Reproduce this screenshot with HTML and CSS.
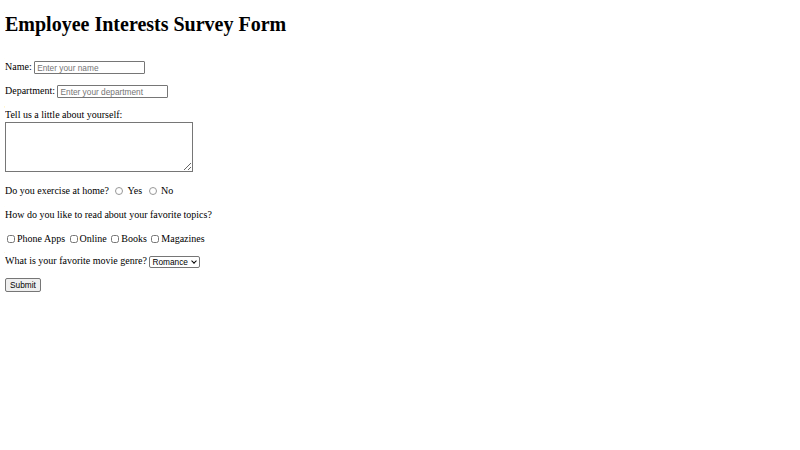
FILE: index.html
```html
<!DOCTYPE html>
<html lang="en">

<head>
    <meta charset="UTF-8">
    <meta name="viewport" content="width=device-width, initial-scale=1.0">
    <title>Employee Interests Survey Form</title>
    <link rel="stylesheet" href="styles.css">
</head>

<body>

<h1>Employee Interests Survey Form</h1>

<form>
    <p>
        <label for="name">Name:</label>
        <input type="text" id="name" name="name" placeholder="Enter your name"/>
    </p>
    <p>
        <label for="department">Department:</label>
        <input type="text" id="department" name="department" placeholder="Enter your department"/>
    </p>
    <p>
        <label for="about">Tell us a little about yourself:</label><br/>
        <textarea id="about" name="about" class="about"></textarea>
    </p>
    <p>
        Do you exercise at home?
        <input type="radio" id="exYes" name="exercise" value="yes"/>
        <label for="exYes">Yes</label>
        <input type="radio" id="exNo" name="exercise" value="no"/>
        <label for="exNo">No</label>
    </p>
    <p>How do you like to read about your favorite topics?</p>
    <p class="reads">
        <input type="checkbox" id="apps" name="read" value="apps"/><label for="apps">Phone Apps</label>
        <input type="checkbox" id="online" name="read" value="online"/><label for="online">Online</label>
        <input type="checkbox" id="books" name="read" value="books"/><label for="books">Books</label>
        <input type="checkbox" id="magazines" name="read" value="magazines"/><label for="magazines">Magazines</label>
    </p>
    <p class="genre">
        <label for="genre">What is your favorite movie genre?</label>
        <span class="pick">
            <select id="genre" name="genre">
                <option>Romance</option>
                <option>Comedy</option>
                <option>Action</option>
                <option>Drama</option>
                <option>Horror</option>
            </select>
        </span>
    </p>
    <button type="submit">Submit</button>
</form>

</body>

</html>
```

FILE: styles.css
```css
body {
    margin: 5px;
    font-family: "Liberation Serif", "Times New Roman", serif;
    font-size: 10px;
    color: #000;
    background: #fff;
}

h1 {
    font-size: 20px;
    margin: 8px 0 24px;
}

p {
    margin: 10px 0;
    line-height: 14px;
}

.reads {
    margin-bottom: 8px;
}

.genre {
    margin-top: 8px;
}

input, select, button, textarea {
    font-family: "Liberation Sans", Arial, sans-serif;
    font-size: 8.3px;
}

input[type=text] {
    width: 111px;
    height: 13px;
    box-sizing: border-box;
    padding: 0 2px;
    border: 1px solid #767676;
    border-radius: 1px;
    vertical-align: middle;
}

input[type=radio] {
    width: 8px;
    height: 8px;
    margin: 0 2px 0 4px;
    vertical-align: -1px;
    opacity: 0.75;
}

input[type=checkbox] {
    width: 8px;
    height: 8px;
    margin: 0 2px;
    vertical-align: -1px;
}

.about {
    width: 188px;
    height: 50px;
    box-sizing: border-box;
    border: 1px solid #767676;
    margin: 0 0 2px;
    vertical-align: bottom;
}

/* select with its own small chevron */
.pick {
    position: relative;
    display: inline-block;
    height: 12px;
    vertical-align: middle;
}

.pick select {
    appearance: none;
    display: block;
    height: 12px;
    margin: 0;
    padding: 0 11px 0 2px;
    border: 1px solid #767676;
    border-radius: 2px;
    background: #fff;
    color: #000;
    line-height: 10px;
}

.pick::after {
    content: "";
    position: absolute;
    right: 4px;
    top: 3px;
    width: 3px;
    height: 3px;
    border-right: 1.5px solid #000;
    border-bottom: 1.5px solid #000;
    transform: rotate(45deg);
    pointer-events: none;
}

button {
    padding: 1px 4px;
    border: 1px solid #767676;
    border-radius: 2px;
    background: #efefef;
}
```
